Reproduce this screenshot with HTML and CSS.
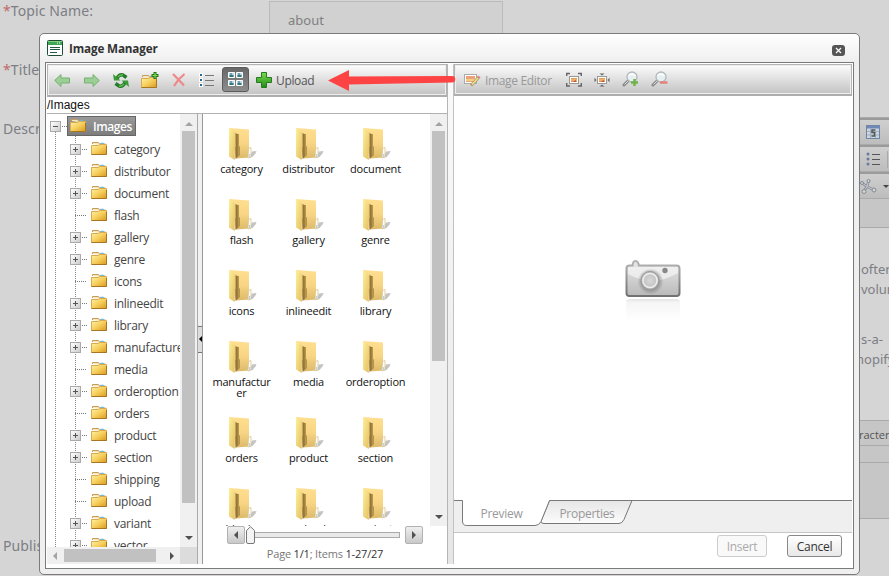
FILE: index.html
```html
<!DOCTYPE html>
<html lang="en">
<head>
    <meta charset="UTF-8">
    <title>Image Manager</title>
    <link rel="stylesheet" href="styles.css">
</head>
<body>
    <!-- Shared icons -->
    <svg class="defs" width="0" height="0">
        <defs>
            <linearGradient id="gold" x1="0" y1="0" x2="1" y2="1">
                <stop offset="0" stop-color="#fff3a6"/><stop offset=".5" stop-color="#f6cf5c"/><stop offset="1" stop-color="#d99a1e"/>
            </linearGradient>
            <linearGradient id="sand" x1="0" y1="0" x2="0" y2="1">
                <stop offset="0" stop-color="#ffdf90"/><stop offset=".5" stop-color="#f8d584"/><stop offset="1" stop-color="#dcba6a"/>
            </linearGradient>
            <linearGradient id="flap" x1="0" y1="0" x2="1" y2="1">
                <stop offset="0" stop-color="#fff09a"/><stop offset="1" stop-color="#e2bd60"/>
            </linearGradient>
            <linearGradient id="green" x1="0" y1="0" x2="0" y2="1">
                <stop offset="0" stop-color="#7ddc4b"/><stop offset="1" stop-color="#1f8a1c"/>
            </linearGradient>
            <linearGradient id="metal" x1="0" y1="0" x2="0" y2="1">
                <stop offset="0" stop-color="#e9e9e9"/><stop offset="1" stop-color="#b9b9b9"/>
            </linearGradient>
            <linearGradient id="rim" x1="0" y1="0" x2="0" y2="1">
                <stop offset="0" stop-color="#b5b5b5"/><stop offset="1" stop-color="#717171"/>
            </linearGradient>
            <linearGradient id="fade" x1="0" y1="0" x2="0" y2="1">
                <stop offset="0" stop-color="#e4e4e4"/><stop offset=".15" stop-color="#f5f5f5"/><stop offset="1" stop-color="#fff"/>
            </linearGradient>
            <linearGradient id="tabfill" x1="0" y1="0" x2="0" y2="1">
                <stop offset="0" stop-color="#e6e6e6"/><stop offset="1" stop-color="#fcfcfc"/>
            </linearGradient>
            <radialGradient id="lens"><stop offset="0" stop-color="#d8d8d8"/><stop offset="1" stop-color="#bcbcbc"/></radialGradient>
            <radialGradient id="halo"><stop offset=".6" stop-color="#858585"/><stop offset="1" stop-color="#858585" stop-opacity="0"/></radialGradient>
        </defs>
        <symbol id="folder" viewBox="0 0 16 14">
            <path d="M1.500 3V1.500h6l1 1.500h6V5" fill="#fbe9b8" stroke="#c79a5c"/>
            <path d="M9 1.800h3.500l1 1.700H10z" fill="#69b9dc"/>
            <path d="M.5 4.500h7l1.500-1h6.500v10H.5z" fill="url(#gold)" stroke="#d9ab50"/>
            <path d="M.5 13.500h15V5" fill="none" stroke="#a87522"/>
        </symbol>
        <symbol id="bigfolder" viewBox="0 0 32 32">
            <path d="M23 30l3-6.500 4.500-.5-1 2.500-3 3.500z" fill="#c4c4c4"/>
            <path d="M3 0l20 1.500V29.500l-13 1z" fill="url(#sand)"/>
            <path d="M9 5l4 1.500V18l.8 1.200V27L9.500 31z" fill="#94763a"/>
            <path d="M11.500 6.200l1.500.5V18l.8 1.200V27l-2 1.800z" fill="#b8964c"/>
            <path d="M3 0l6.500 4.500v14L8.800 20v12L3 28.500z" fill="url(#flap)"/>
            <path d="M22.500 20.500l2.500-1V29l-3 1z" fill="#fff" stroke="#d9c38a" stroke-width=".8"/>
            <path d="M23.700 26v3" stroke="#9fc8ee"/>
        </symbol>
        <symbol id="photo" viewBox="0 0 16 16">
            <rect x="3.500" y="4.500" width="9" height="7" fill="#fff" stroke="#999"/>
            <path d="M5 6h6v4H5z" fill="#e79955"/><path d="M5 8h6" stroke="#f4c87c"/><path d="M8 9l2-1v2H7z" fill="#bc593c"/>
        </symbol>
        <symbol id="magnifier" viewBox="0 0 17 17">
            <path d="M6.500 9.500L2 14" stroke="#888" stroke-width="3" stroke-linecap="round"/>
            <path d="M6 10L2.500 13.500" stroke="#ddd"/>
            <circle cx="10" cy="6" r="5" fill="#e6eff2" stroke="#b2b9bb" stroke-width="1.300"/>
            <path d="M6.500 5q3-4 7 0" fill="none" stroke="#fff" stroke-width="1.500"/>
        </symbol>
    </svg>

    <form class="page">
        <div class="row">
            <label><span class="req">*</span>Topic Name:</label>
            <input class="field" type="text" value="about">
        </div>
        <div class="row"><label><span class="req">*</span>Title:</label></div>
        <div class="row row-editor">
            <label>Description:</label>
            <div class="editor">
                <div class="editor-bar">
                    <svg width="14" height="14" viewBox="0 0 14 14"><rect x=".5" y=".5" width="13" height="13" fill="#c9d6df" stroke="#7286a3"/><path d="M1 2h12" stroke="#6e88b8" stroke-width="3"/><path d="M1 6.500h12M1 10h12M4.500 4v9M9.500 4v9" stroke="#a3afbb"/><path d="M9 5H6v2.500h2.500V11H5.500" fill="none" stroke="#555" stroke-width="1.500"/></svg>
                </div>
                <div class="editor-bar">
                    <svg width="14" height="14" viewBox="0 0 14 14"><g fill="#667b9e"><circle cx="2" cy="2" r="1.500"/><circle cx="2" cy="7" r="1.500"/><circle cx="2" cy="12" r="1.500"/></g><path d="M6 2.500h8M6 7.500h8M6 12.500h8" stroke="#555"/></svg>
                    <span class="bar-sep"></span>
                </div>
                <div class="editor-bar bar-graph">
                    <svg width="17" height="15" viewBox="0 0 17 15"><path d="M2 4l5 3.500 1.500-5M7 7.500L4 12M7 7.500l7 3.500" fill="none" stroke="#818993" stroke-width="2.400"/><path d="M2 4l5 3.500 1.500-5M7 7.500L4 12M7 7.500l7 3.500" fill="none" stroke="#c9ccd0"/><g fill="#d2d5d8" stroke="#828a93"><circle cx="2" cy="4" r="1.500"/><circle cx="8.500" cy="2" r="1.500"/><circle cx="4" cy="12.500" r="2"/><circle cx="14" cy="11" r="2"/></g></svg>
                    <span class="caret"></span>
                </div>
                <div class="editor-fill"></div>
                <div class="editor-text">
                    <p>often<br>volume</p>
                    <p>s-a-<br><span class="out">hopify</span></p>
                </div>
                <div class="editor-tabs">racters</div>
                <div class="editor-path"></div>
                <div class="editor-foot"></div>
            </div>
        </div>
        <div class="row"><label>Published:</label></div>
    </form>

    <div class="window">
        <div class="titlebar">
            <svg width="16" height="16" viewBox="0 0 16 16"><rect x=".5" y=".5" width="15" height="15" rx="1" fill="#fff" stroke="#1e4d35"/><path d="M1 1h14v4H1z" fill="#3fa653"/><path d="M1 1.500h14" stroke="#82cf7e"/><path d="M10 3h1M12 3h1" stroke="#fff"/><path d="M3 7.500h10M3 9.500h10M3 12.500h7" stroke="#265943"/></svg>
            <h1>Image Manager</h1>
            <button class="close" type="button" aria-label="Close"><svg width="13" height="11" viewBox="0 0 13 11"><path d="M4 3l5 5M9 3L4 8" stroke="#fff" stroke-width="1.200"/></svg></button>
        </div>
        <div class="content">
            <section class="explorer">
                <div class="toolbar">
                    <svg class="t-back" width="16" height="15" viewBox="0 0 16 15"><path d="M.7 7.500L7 1.500v3.500h8.500v5H7v3.500z" fill="#9bcf95" stroke="#76b071"/></svg>
                    <svg class="t-fwd" width="16" height="15" viewBox="0 0 16 15"><path d="M15.300 7.500L9 1.500v3.500H.5v5H9v3.500z" fill="#9bcf95" stroke="#76b071"/></svg>
                    <svg class="t-refresh" width="16" height="17" viewBox="0 0 16 17"><path d="M4 6.500Q6 2 10 3l3.500 2.500" fill="none" stroke="#267b2a" stroke-width="3.500"/><path d="M12 10.500q-2 4.500-6 3.500L2.500 11.500" fill="none" stroke="#267b2a" stroke-width="3.500"/><path d="M5 5q2-2.500 5-2.300M11 12q-2 2.500-5 2.300" fill="none" stroke="#65ba55" stroke-width="1.500"/><path d="M0 2l1 6.500h6.500zM16 15l-1-6.500H8.500z" fill="#3a9a37"/></svg>
                    <svg class="t-new" width="18" height="16" viewBox="0 0 18 16"><use href="#folder" y="2" width="16" height="14"/><path d="M14 0v7M10.500 3.500h7" stroke="#2c741e" stroke-width="3"/><path d="M14 1v5M11.500 3.500h5" stroke="#7dde51" stroke-width="1.200"/></svg>
                    <svg class="t-del" width="14" height="14" viewBox="0 0 14 14"><path d="M1 1q5 5 11 11.500M12.500 1Q6 6 2 13" fill="none" stroke="#ee8888" stroke-width="2.200"/></svg>
                    <svg class="t-list" width="15" height="15" viewBox="0 0 15 15"><path d="M0 2h4M0 7h4M0 12h4" stroke="#fff" stroke-width="4"/><path d="M1 2h2M1 7h2M1 12h2" stroke="#2a6795" stroke-width="2"/><path d="M6 2.500h9M6 7.500h9M6 12.500h9" stroke="#777"/></svg>
                    <span class="t-active">
                        <svg width="16" height="16" viewBox="0 0 16 16"><path d="M.5 1.500h6v5h-6zM8.500 1.500h6v5h-6zM.5 9.500h6v5h-6zM8.500 9.500h6v5h-6z" fill="#b8d7e9" stroke="#fff"/><path d="M1.500 5h4M9.500 5h4M1.500 13h4M9.500 13h4" stroke="#327c73" stroke-width="2"/><path d="M2 3h2M10 3h2M2 11h2M10 11h2" stroke="#2b5e92"/></svg>
                    </span>
                    <svg class="t-plus" width="16" height="16" viewBox="0 0 16 16"><path d="M5.500.5h5v5h5v5h-5v5h-5v-5h-5v-5h5z" fill="url(#green)" stroke="#257c20"/></svg>
                    <span class="t-label">Upload</span>
                </div>
                <div class="address">/Images</div>
                <div class="panes">
                    <div class="tree-pane">
                        <div class="tree">
                            <div class="root"><i class="toggle minus"></i><span class="selected"><svg width="16" height="14"><use href="#folder"/></svg>Images</span></div>
                            <ul>
                                <li><i class="toggle"></i><svg width="16" height="14"><use href="#folder"/></svg>category</li>
                                <li><i class="toggle"></i><svg width="16" height="14"><use href="#folder"/></svg>distributor</li>
                                <li><i class="toggle"></i><svg width="16" height="14"><use href="#folder"/></svg>document</li>
                                <li><i class="leaf"></i><svg width="16" height="14"><use href="#folder"/></svg>flash</li>
                                <li><i class="toggle"></i><svg width="16" height="14"><use href="#folder"/></svg>gallery</li>
                                <li><i class="toggle"></i><svg width="16" height="14"><use href="#folder"/></svg>genre</li>
                                <li><i class="leaf"></i><svg width="16" height="14"><use href="#folder"/></svg>icons</li>
                                <li><i class="toggle"></i><svg width="16" height="14"><use href="#folder"/></svg>inlineedit</li>
                                <li><i class="toggle"></i><svg width="16" height="14"><use href="#folder"/></svg>library</li>
                                <li><i class="toggle"></i><svg width="16" height="14"><use href="#folder"/></svg>manufacturer</li>
                                <li><i class="leaf"></i><svg width="16" height="14"><use href="#folder"/></svg>media</li>
                                <li><i class="toggle"></i><svg width="16" height="14"><use href="#folder"/></svg>orderoption</li>
                                <li><i class="leaf"></i><svg width="16" height="14"><use href="#folder"/></svg>orders</li>
                                <li><i class="toggle"></i><svg width="16" height="14"><use href="#folder"/></svg>product</li>
                                <li><i class="toggle"></i><svg width="16" height="14"><use href="#folder"/></svg>section</li>
                                <li><i class="leaf"></i><svg width="16" height="14"><use href="#folder"/></svg>shipping</li>
                                <li><i class="leaf"></i><svg width="16" height="14"><use href="#folder"/></svg>upload</li>
                                <li><i class="toggle"></i><svg width="16" height="14"><use href="#folder"/></svg>variant</li>
                                <li><i class="toggle"></i><svg width="16" height="14"><use href="#folder"/></svg>vector</li>
                            </ul>
                        </div>
                        <div class="vscroll tree-v"><i class="arrow up off"></i><b></b><i class="arrow down"></i></div>
                        <div class="hscroll"><i class="arrow left off"></i><b></b><i class="arrow right"></i></div>
                        <div class="corner"></div>
                    </div>
                    <div class="splitter"><span class="collapse"><i class="arrow left"></i></span></div>
                    <div class="files-pane">
                        <div class="files">
                            <figure><svg width="32" height="32"><use href="#bigfolder"/></svg><figcaption>category</figcaption></figure>
                            <figure><svg width="32" height="32"><use href="#bigfolder"/></svg><figcaption>distributor</figcaption></figure>
                            <figure><svg width="32" height="32"><use href="#bigfolder"/></svg><figcaption>document</figcaption></figure>
                            <figure><svg width="32" height="32"><use href="#bigfolder"/></svg><figcaption>flash</figcaption></figure>
                            <figure><svg width="32" height="32"><use href="#bigfolder"/></svg><figcaption>gallery</figcaption></figure>
                            <figure><svg width="32" height="32"><use href="#bigfolder"/></svg><figcaption>genre</figcaption></figure>
                            <figure><svg width="32" height="32"><use href="#bigfolder"/></svg><figcaption>icons</figcaption></figure>
                            <figure><svg width="32" height="32"><use href="#bigfolder"/></svg><figcaption>inlineedit</figcaption></figure>
                            <figure><svg width="32" height="32"><use href="#bigfolder"/></svg><figcaption>library</figcaption></figure>
                            <figure><svg width="32" height="32"><use href="#bigfolder"/></svg><figcaption>manufactur<br>er</figcaption></figure>
                            <figure><svg width="32" height="32"><use href="#bigfolder"/></svg><figcaption>media</figcaption></figure>
                            <figure><svg width="32" height="32"><use href="#bigfolder"/></svg><figcaption>orderoption</figcaption></figure>
                            <figure><svg width="32" height="32"><use href="#bigfolder"/></svg><figcaption>orders</figcaption></figure>
                            <figure><svg width="32" height="32"><use href="#bigfolder"/></svg><figcaption>product</figcaption></figure>
                            <figure><svg width="32" height="32"><use href="#bigfolder"/></svg><figcaption>section</figcaption></figure>
                            <figure><svg width="32" height="32"><use href="#bigfolder"/></svg><figcaption>shipping</figcaption></figure>
                            <figure><svg width="32" height="32"><use href="#bigfolder"/></svg><figcaption>upload</figcaption></figure>
                            <figure><svg width="32" height="32"><use href="#bigfolder"/></svg><figcaption>variant</figcaption></figure>
                        </div>
                        <div class="vscroll files-v"><i class="arrow up off"></i><b></b><i class="arrow down"></i></div>
                        <div class="pager">
                            <div class="slider">
                                <button type="button"><i class="arrow left"></i></button>
                                <svg width="9" height="18" viewBox="0 0 9 18"><path d="M.5 16V4.500L4.500.7l4 3.800V16q0 1.500-1.500 1.500H2Q.5 17.500.5 16z" fill="#f4f4f4" stroke="#777"/></svg>
                                <span class="track"></span>
                                <button type="button"><i class="arrow right"></i></button>
                            </div>
                            <div class="pages">Page <b>1/1</b>; Items <b>1-27/27</b></div>
                        </div>
                    </div>
                </div>
            </section>
            <div class="divider"></div>
            <section class="preview">
                <div class="toolbar toolbar-image">
                    <svg width="17" height="14" viewBox="0 0 17 14"><rect x=".5" y="1.500" width="12" height="9" fill="#fff" stroke="#aaa"/><path d="M2 3h9v6H2z" fill="#eda17b"/><path d="M2 7h9" stroke="#f5d184" stroke-width="2"/><path d="M7 12.500l8-8.500" stroke="#b09a62" stroke-width="3"/><path d="M8 11.500l6-6.500" stroke="#f6e39b" stroke-width="1.300"/><path d="M14.500 4.500l1-1" stroke="#e4858a" stroke-width="3"/></svg>
                    <span class="t-label">Image Editor</span>
                    <svg class="t-fit" width="16" height="16" viewBox="0 0 16 16"><use href="#photo"/><path d="M.7 4V1.500H4M12 1.500h3.300V4M15.300 11v3H12M4 14H.7v-3" fill="none" stroke="#666" stroke-width="1.400"/></svg>
                    <svg class="t-best" width="16" height="16" viewBox="0 0 16 16"><use href="#photo"/><path d="M8 3.500L5.500 1.500h5zM8 12.500l-2.500 2h5zM2.500 8L.5 5.800v4.400zM13.500 8l2-2.200v4.400z" fill="#666"/></svg>
                    <svg class="t-in" width="17" height="17" viewBox="0 0 17 17"><use href="#magnifier" width="17" height="17"/><path d="M12.500 8v7M9 11.500h7" stroke="#71b34d" stroke-width="2.500"/></svg>
                    <svg class="t-out" width="17" height="17" viewBox="0 0 17 17"><use href="#magnifier" width="17" height="17"/><path d="M9 11.500h7.500" stroke="#e2827f" stroke-width="2.500"/></svg>
                </div>
                <div class="stage">
                    <svg width="56" height="64" viewBox="0 0 56 64">
                        <path d="M1.500 8q0-2.500 3-2.500h3Q8 1 10.500 1T14 5.500h37.500q3 0 3 3V33q0 3-3 3h-47q-3 0-3-3z" fill="url(#metal)" stroke="url(#rim)" stroke-width="2"/>
                        <path d="M3 7h50v6Q28 28 3 14z" fill="#f7f7f7" opacity=".65"/>
                        <circle cx="25.500" cy="21.500" r="13" fill="url(#halo)" opacity=".8"/>
                        <circle cx="25" cy="20.500" r="9" fill="url(#lens)" stroke="#999"/>
                        <circle cx="25" cy="20.500" r="7" fill="none" stroke="#eee" stroke-width="1.500"/>
                        <circle cx="40" cy="10.500" r="2.700" fill="#888"/>
                        <path d="M1 62V42q0-3 4-3h46q4 0 4 3v20z" fill="url(#fade)"/>
                    </svg>
                </div>
                <div class="tabs">
                    <svg width="398" height="32" viewBox="0 0 398 32">
                        <path d="M86.500 22.500L95.500.5H178l-8 19q-2 4-5 4H90q-3 0-3.500-2" fill="url(#tabfill)" stroke="#777"/>
                        <path d="M8.500 0v21q0 4.500 4 4.500H81q4 0 6-4L95.500.5V0z" fill="#fff"/>
                        <path d="M0 .5h8.500V21q0 4.500 4 4.500H81q4 0 6-4L95.500.5H398" fill="none" stroke="#777a7a"/>
                    </svg>
                    <span class="tab">Preview</span>
                    <span class="tab">Properties</span>
                </div>
                <div class="actions">
                    <button class="insert" type="button" disabled>Insert</button>
                    <button class="cancel" type="button">Cancel</button>
                </div>
            </section>
        </div>
    </div>

    <!-- Arrow pointing at the upload button -->
    <svg class="pointer" width="130" height="24" viewBox="0 0 130 24"><path d="M0 11.500L21 1v6.500l103-.5a3.200 3.200 0 0 1 0 6.500L21 15.500V22z" fill="#fd4343"/></svg>
</body>
</html>
```

FILE: styles.css
```css
* {
    box-sizing: border-box;
}
body {
    margin: 0;
    width: 889px;
    height: 576px;
    overflow: hidden;
    background-color: #d5d5d5;
    font-family: "Open Sans", "Noto Sans", sans-serif;
    font-size: 12px;
    color: #333;
}
svg {
    display: block;
    flex: none;
}
button {
    font-family: inherit;
    padding: 0;
}
.defs {
    position: absolute;
}

/* Page under the dialog */
.page {
    width: 889px;
    overflow: hidden;
    color: #7c7e84;
    font-family: "Noto Sans", sans-serif;
    font-size: 14px;
}
.row {
    display: flex;
    height: 59px;
    padding-left: 3px;
}
.row label {
    flex: none;
    width: 266px;
    line-height: 22px;
    letter-spacing: .1px;
}
.req {
    color: #bd6b69;
}
.field {
    width: 234px;
    height: 38px;
    margin-top: 1px;
    padding: 0 18px;
    border: 1px solid #bababa;
    background-color: #d1d1d1;
    color: #808080;
    font: 13px "Noto Sans", sans-serif;
}
.row-editor {
    height: 417px;
}
.editor {
    display: flex;
    flex-direction: column;
    flex: 1;
    min-width: 0;
    height: 402px;
    margin-top: -1px;
    border: 1px solid #aaa;
    border-width: 1px 0;
    background-color: #c6c6c6;
}
.editor-bar {
    display: flex;
    align-items: center;
    height: 27px;
    padding-left: 597px;
    border-top: 2px solid #9b9b9b;
    border-bottom: 1px solid #aaa;
    background: linear-gradient(#cfcfcf, #bdbdbd);
}
.bar-graph {
    padding-left: 591px;
}
.bar-sep {
    width: 1px;
    height: 17px;
    margin-left: 7px;
    background-color: #aaa;
}
.caret {
    margin-left: 6px;
    border: 3px solid transparent;
    border-top-color: #444;
    border-bottom: 0;
}
.editor-fill {
    height: 28px;
}
.editor-text {
    height: 194px;
    padding: 31px 0 0 592px;
    border: 1px solid #aaa;
    border-width: 1px 0;
    background-color: #d5d5d5;
    font-size: 13px;
    line-height: 20px;
}
.editor-text p {
    margin: 0 0 30px;
}
.out {
    margin-left: -5px;
}
.editor-tabs {
    height: 25px;
    padding-left: 590px;
    border-bottom: 1px solid #aaa;
    font: 11px/28px "Open Sans", sans-serif;
    color: #555;
}
.editor-path {
    height: 17px;
    border-bottom: 1px solid #aaa;
}
.editor-foot {
    flex: 1;
}

/* Dialog */
.window {
    position: absolute;
    left: 39px;
    top: 33px;
    width: 821px;
    height: 542px;
    padding: 0 5px 5px;
    border: 1px solid #7b7b7b;
    border-radius: 5px;
    background: linear-gradient(#fff, #efefef 28px);
}
.titlebar {
    display: flex;
    align-items: center;
    height: 28px;
    padding: 0 9px 0 2px;
}
.titlebar h1 {
    flex: 1;
    margin: 0 0 0 6px;
    font-size: 11.700px;
    font-weight: bold;
    letter-spacing: -.15px;
    color: #333;
}
.close {
    width: 13px;
    height: 11px;
    margin-top: 5px;
    border: 0;
    border-radius: 3px;
    background-color: #565656;
}
.content {
    display: flex;
    height: 507px;
    padding: 1px 0 4px 1px;
    border: 1px solid #777b7b;
    background-color: #fff;
}
.explorer {
    width: 401px;
    border-right: 1px solid #b5b5b5;
}
.toolbar {
    display: flex;
    align-items: center;
    height: 33px;
    padding: 0 6px;
    border: 1px solid #b4b4b4;
    border-bottom: 2px solid #adadad;
    box-shadow: inset 0 0 0 1px #eee;
    background: linear-gradient(#fdfdfd, #e2e2e2 45%, #c3c3c3);
}
.t-fwd { margin-left: 14px; }
.t-refresh { margin-left: 13px; }
.t-new { margin-left: 12px; }
.t-del { margin-left: 13px; }
.t-list { margin-left: 13px; }
.t-active {
    display: flex;
    align-items: center;
    justify-content: center;
    width: 27px;
    height: 25px;
    margin-left: 8px;
    margin-top: -2px;
    border: 1px solid #5c5c5c;
    border-radius: 3px;
    background: linear-gradient(#686868, #8d8d8d);
}
.t-plus { margin-left: 7px; }
.t-label {
    margin-left: 4px;
    font-size: 12px;
    letter-spacing: -.35px;
    color: #555;
}
.address {
    height: 17px;
    border-bottom: 1px solid #b1b1b1;
    font: 12px/17px "Liberation Sans", Arial, sans-serif;
    color: #111;
}
.panes {
    display: flex;
    height: 450px;
}
.tree-pane {
    display: grid;
    grid-template-columns: 133px 17px;
    grid-template-rows: 433px 17px;
    width: 150px;
}
.tree {
    overflow: hidden;
    padding-top: 2px;
    background: repeating-linear-gradient(#888 0 1px, transparent 1px 2px) 8px 18px / 1px 100% no-repeat;
}
.root {
    display: flex;
    align-items: center;
    height: 20px;
    padding-left: 3px;
}
.toggle {
    flex: none;
    width: 11px;
    height: 11px;
    border: 1px solid #aaa;
    background:
        linear-gradient(#555, #555) center / 5px 1px no-repeat,
        linear-gradient(#555, #555) center / 1px 5px no-repeat,
        linear-gradient(135deg, #fff, #ccc);
}
.minus {
    background:
        linear-gradient(#555, #555) center / 5px 1px no-repeat,
        linear-gradient(135deg, #fff, #ccc);
}
.toggle::after {
    content: "";
    display: block;
    width: 5px;
    margin: 4px 0 0 11px;
    border-top: 1px dotted #777;
}
.selected {
    display: flex;
    align-items: center;
    width: 69px;
    height: 20px;
    margin-left: 6px;
    padding-left: 2px;
    border: 1px solid #666;
    background: linear-gradient(#999, #7d7d7d);
    color: #fff;
    font-size: 12px;
    font-weight: 600;
    letter-spacing: -.45px;
}
.selected svg {
    margin-right: 7px;
    margin-top: -2px;
}
.tree ul {
    margin: 0 0 0 20px;
    padding: 2px 0 0;
    list-style: none;
    background: repeating-linear-gradient(#888 0 1px, transparent 1px 2px) 8px 0 / 1px 100% no-repeat;
}
.tree li {
    display: flex;
    align-items: center;
    height: 22px;
    padding-left: 3px;
    font-size: 12px;
    letter-spacing: -.27px;
    white-space: nowrap;
    color: #444;
}
.tree li svg {
    margin: -2px 7px 0 10px;
}
.tree .leaf {
    flex: none;
    width: 11px;
    margin-left: 5px;
    border-top: 1px dotted #777;
}
.tree .leaf + svg {
    margin-left: 5px;
}
.vscroll {
    display: flex;
    flex-direction: column;
    align-items: center;
    background-color: #f0f0f0;
}
.vscroll b {
    width: 13px;
    background-color: #c1c1c1;
}
.vscroll .up {
    margin: 8px 0 5px;
}
.vscroll .down {
    margin-top: auto;
    margin-bottom: 7px;
}
.tree-v b { height: 372px; }
.files-v b { height: 230px; }
.hscroll {
    display: flex;
    align-items: center;
    background-color: #f0f0f0;
}
.hscroll .left { margin: 0 7px 0 6px; }
.hscroll b {
    width: 92px;
    height: 13px;
    background-color: #c1c1c1;
}
.hscroll .right { margin-left: 14px; }
.corner {
    background-color: #dcdcdc;
}
.arrow {
    flex: none;
    width: 0;
    height: 0;
    border: 4px solid transparent;
}
.up { border-bottom-color: #505050; border-top: 0; }
.down { border-top-color: #505050; border-bottom: 0; }
.left { border-right-color: #505050; border-left: 0; }
.right { border-left-color: #505050; border-right: 0; }
.up.off { border-bottom-color: #a3a3a3; }
.left.off { border-right-color: #a3a3a3; }
.splitter {
    display: flex;
    align-items: center;
    width: 6px;
    border-left: 1px solid #aaa;
    border-right: 1px solid #999;
    background-color: #f0f0f0;
}
.collapse {
    display: flex;
    align-items: center;
    justify-content: flex-end;
    width: 4px;
    height: 27px;
    border: 1px solid #777;
    border-width: 1px 0;
    background-color: #ddd;
}
.collapse .arrow {
    border-width: 3px 3px 3px 0;
    border-right-color: #000;
}
.files-pane {
    display: grid;
    grid-template-columns: 227px 17px;
    grid-template-rows: 412px 38px;
    width: 244px;
}
.files {
    display: grid;
    grid-template-columns: repeat(3, 67px);
    grid-auto-rows: max-content;
    align-content: start;
    overflow: hidden;
    padding: 3px 0 0 5px;
}
.files figure {
    display: flex;
    flex-direction: column;
    align-items: center;
    min-height: 71px;
    margin: 0;
    padding: 11px 0 8px;
}
.files svg {
    margin-left: 1px;
}
.files figcaption {
    margin-top: 3px;
    font-size: 11px;
    line-height: 11px;
    letter-spacing: -.2px;
    text-align: center;
    white-space: nowrap;
    color: #111;
}
.pager {
    grid-column: 1 / 3;
}
.slider {
    display: flex;
    align-items: center;
    padding-left: 24px;
}
.slider button {
    display: flex;
    align-items: center;
    justify-content: center;
    width: 18px;
    height: 18px;
    border: 1px solid #b2b2b2;
    border-radius: 2px;
    background: linear-gradient(#efefef, #c8c8c8);
}
.slider svg {
    margin-left: 1px;
}
.track {
    width: 145px;
    height: 6px;
    margin-right: 5px;
    border: 1px solid #aaa;
    border-left: 0;
    background-color: #e9e9e9;
}
.pages {
    margin-top: 2px;
    font-size: 11px;
    line-height: 16px;
    letter-spacing: -.18px;
    text-align: center;
    color: #777;
}
.pages b {
    font-weight: normal;
    color: #333;
}
.divider {
    width: 5px;
    background: linear-gradient(#fafafa, #e6e6e6);
}
.preview {
    display: flex;
    flex-direction: column;
    width: 400px;
    padding-right: 1px;
    border-left: 1px solid #c2c2c2;
}
.toolbar-image {
    height: 32px;
    padding-left: 9px;
}
.toolbar-image .t-label {
    margin-top: 2px;
    color: #999;
}
.t-fit { margin-left: 14px; }
.t-best { margin-left: 12px; }
.t-in { margin-left: 12px; }
.t-out { margin-left: 12px; }
.stage {
    display: flex;
    justify-content: center;
    height: 404px;
    padding-top: 164px;
}
.tabs {
    display: grid;
    grid-template-columns: 95px 76px;
    height: 33px;
    border-bottom: 1px solid #c6c6c6;
    background-color: #efefef;
}
.tabs svg {
    grid-area: 1 / 1;
}
.tab {
    grid-row: 1;
    z-index: 1;
    padding-top: 5px;
    text-align: center;
    line-height: 18px;
    letter-spacing: -.3px;
    color: #999;
}
.tab:nth-of-type(1) {
    grid-column: 1;
}
.actions {
    display: flex;
    justify-content: flex-end;
    padding: 2px 10px 0 0;
    gap: 20px;
}
.actions button {
    height: 22px;
    border: 1px solid #888;
    border-radius: 3px;
    background: linear-gradient(#fff, #e8e8e8);
    font-size: 12px;
    letter-spacing: -.3px;
    color: #333;
}
.actions .insert {
    width: 50px;
    border-color: #ccc;
    background: #f9f9f9;
    color: #aaa;
}
.actions .cancel {
    width: 55px;
}
.pointer {
    position: absolute;
    left: 328px;
    top: 69px;
}
```
